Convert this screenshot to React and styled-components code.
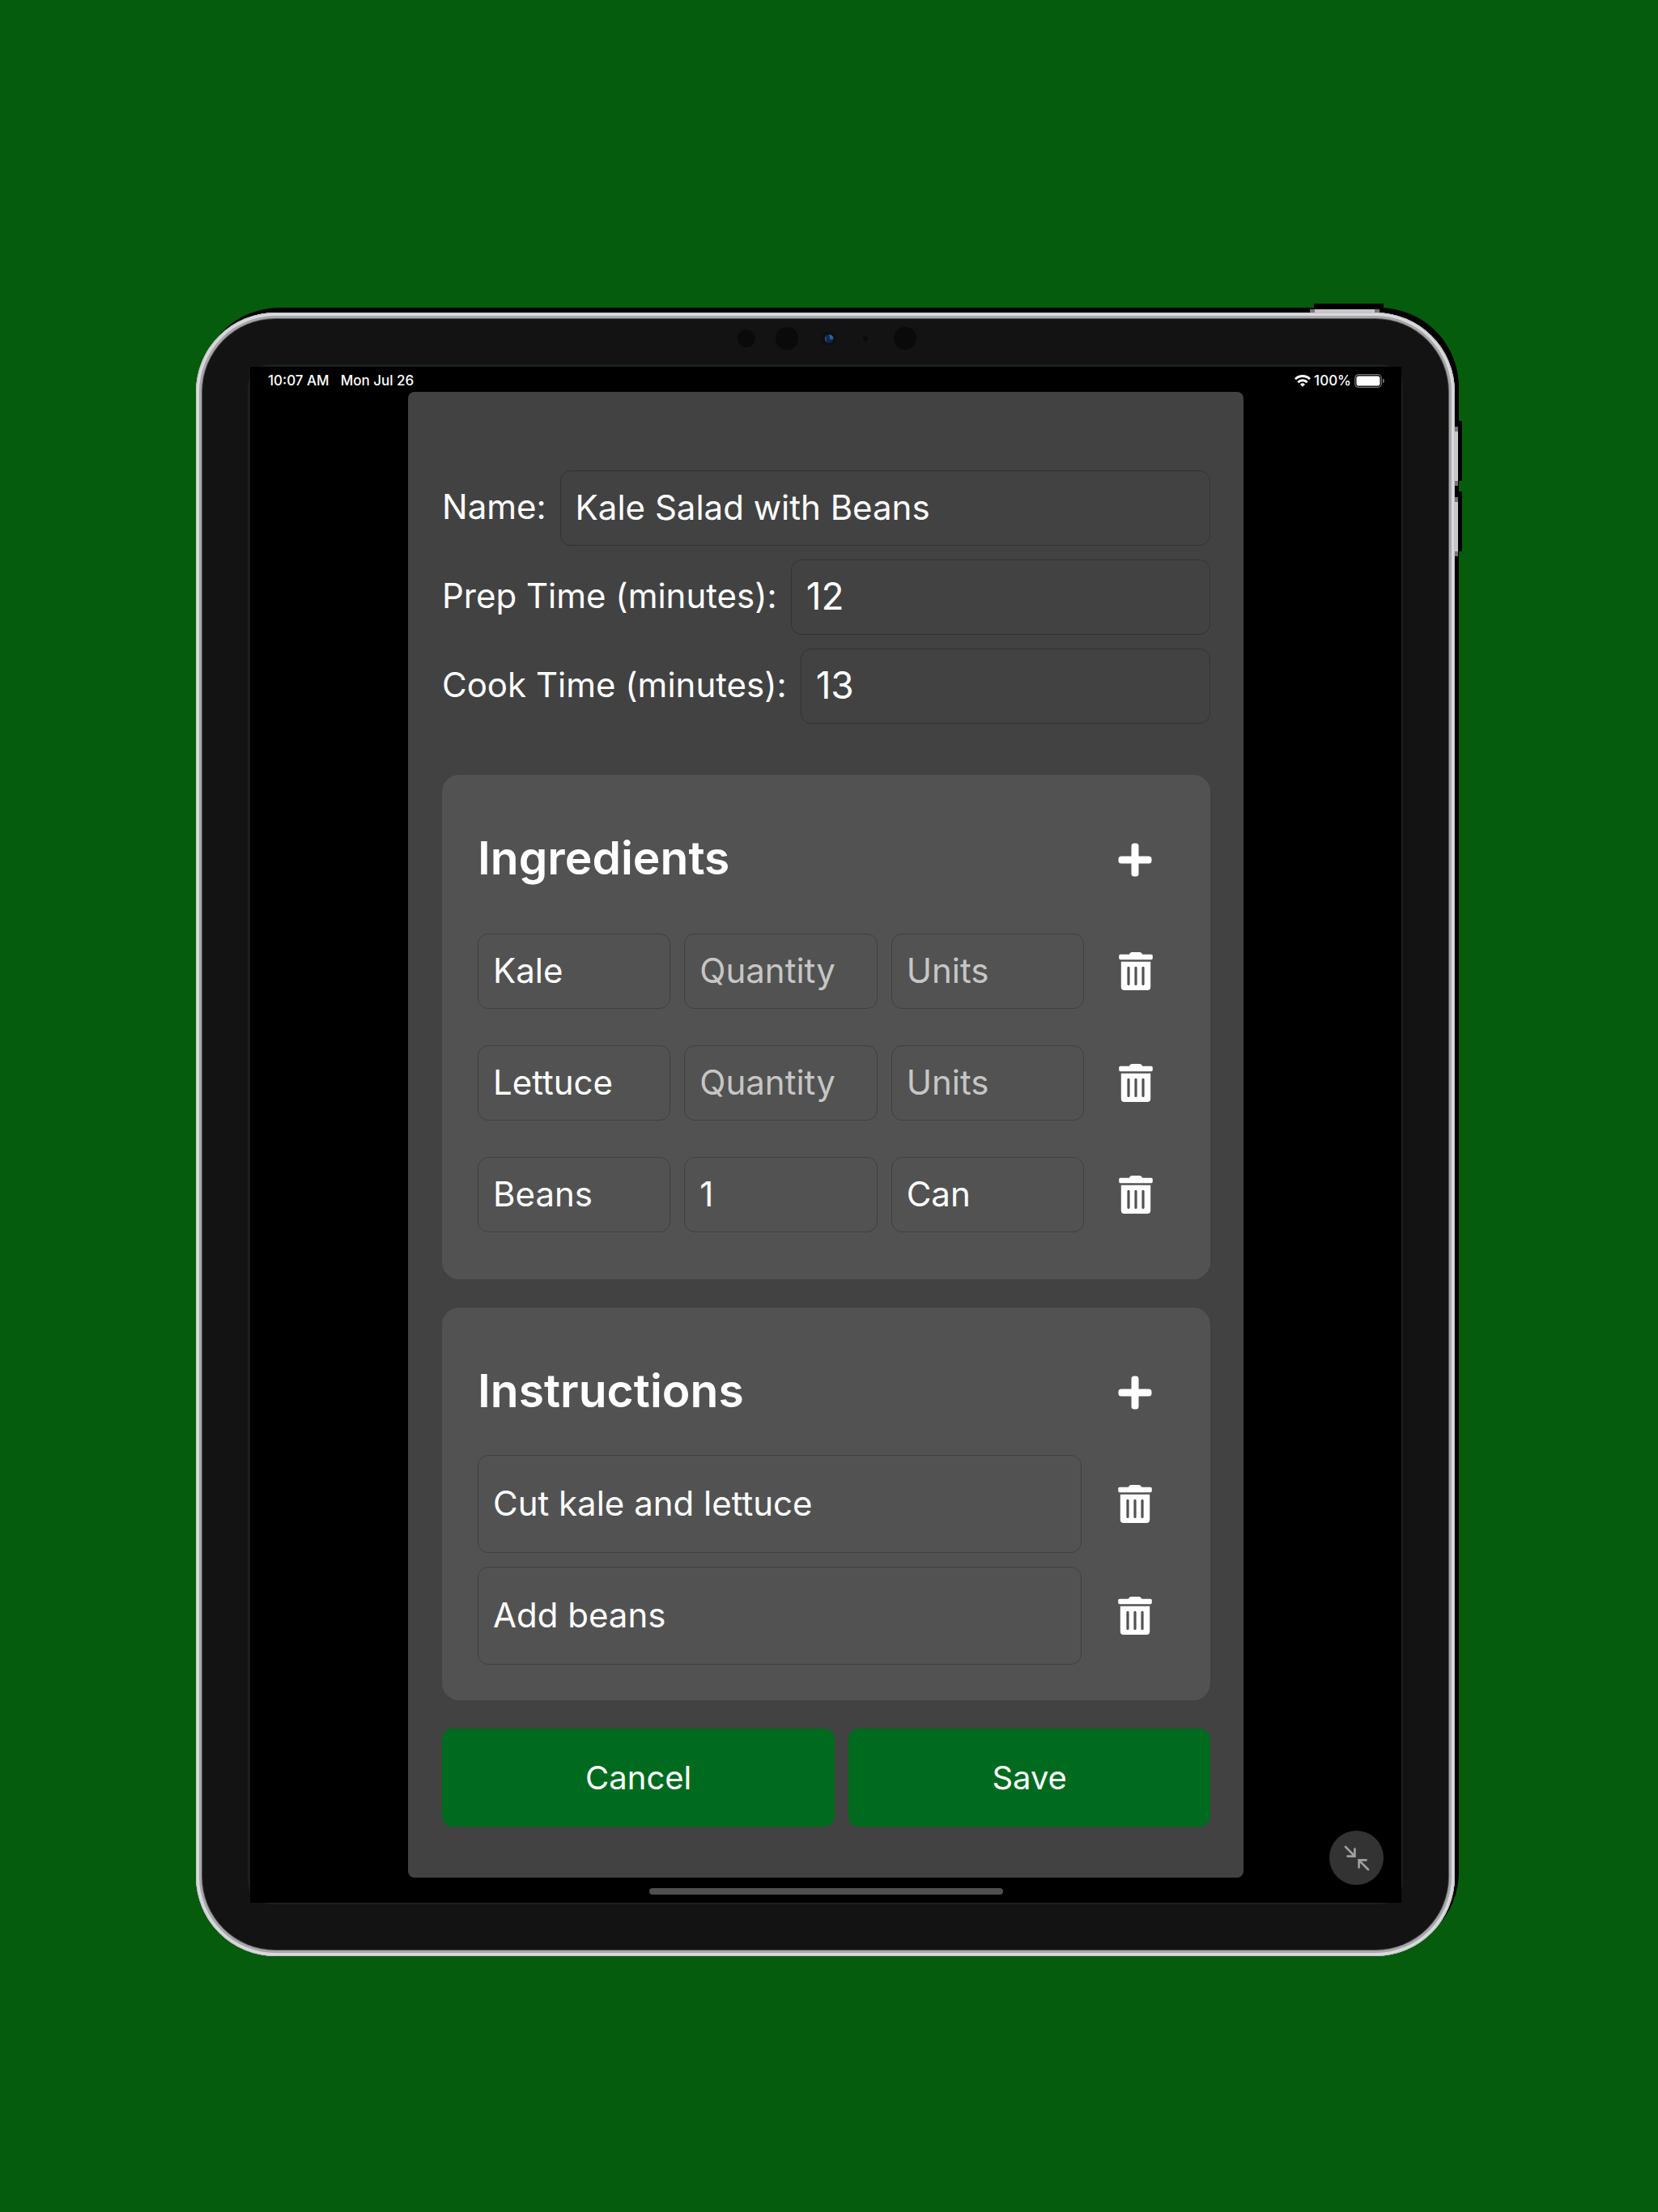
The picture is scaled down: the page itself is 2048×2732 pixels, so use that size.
import React from "react";
import styled, { createGlobalStyle } from "styled-components";

const GlobalStyle = createGlobalStyle`
  *, *::before, *::after { box-sizing: border-box; }
  html { background: #055c0d; }
  body {
    margin: 0;
    background: #055c0d;
    color: #fff;
    font-family: Inter, "Liberation Sans", sans-serif;
  }
`;

const Page = styled.main`
  padding: 386px 251px 316px 242px;
`;

const Device = styled.div`
  position: relative;
  padding: 8px;
  border-radius: 98px;
  background: #555;
  box-shadow:
    inset 0 0 0 1px #c2c2c5,
    inset 0 0 0 4px #dadade,
    inset 0 0 0 7px #a8a8ab,
    5px -6px 0 #000;
`;

const HardwareKey = styled.span`
  position: absolute;
  background: #c8c8c8;
  box-shadow: 5px -6px 0 #000, 5px -7px 0 #000;
`;

const PowerKey = styled(HardwareKey)`
  top: -4px;
  right: 93px;
  width: 86px;
  height: 4px;
  border: solid #777;
  border-width: 0 6px;
`;

const VolumeKey = styled(HardwareKey)`
  top: ${(p) => p.$top}px;
  right: -4px;
  width: 4px;
  height: 73px;
  border: solid #777;
  border-width: 6px 0;
`;

const Bezel = styled.div`
  padding: 0 56px 56px;
  border-radius: 90px;
  background: #131313;
`;

const CameraBar = styled.div`
  display: flex;
  justify-content: center;
  height: 56px;
  padding-top: 4px;
`;

const ScreenEdge = styled.div`
  padding: 3px 2px 2px 3px;
  border-radius: 28px;
  background: #1a1f1f;
`;

const Screen = styled.div`
  position: relative;
  background: #000;
`;

const StatusBar = styled.header`
  display: flex;
  align-items: center;
  justify-content: space-between;
  height: 31px;
  padding: 3px 21px 0 22px;
  font-size: 17px;
  font-weight: 500;
  line-height: 20px;
`;

const StatusGroup = styled.div`
  display: flex;
  align-items: center;
  gap: ${(p) => p.$gap}px;
`;

const Panel = styled.form`
  max-width: 1032px;
  margin: 0 auto;
  padding: 97px 41px 63px 42px;
  border-radius: 8px;
  background: #424242;
`;

const Fields = styled.div`
  display: grid;
  gap: 17px;
  margin-bottom: 63px;
`;

const Field = styled.div`
  display: flex;
  align-items: center;
  gap: 17px;
`;

const Label = styled.label`
  padding-bottom: 4px;
  font-size: 42px;
  line-height: 52px;
  white-space: nowrap;
`;

const TextInput = styled.input`
  flex: 1;
  width: 100%;
  min-width: 0;
  height: ${(p) => (p.$tall ? 121 : 93)}px;
  padding: 0 18px 3px;
  border: 1px solid rgba(0, 0, 0, 0.22);
  border-radius: 13px;
  outline: none;
  background: transparent;
  color: #fff;
  font-family: inherit;
  font-size: ${(p) => (p.$numeric ? 46 : 42)}px;

  &::placeholder {
    color: #c6c6c6;
    opacity: 1;
  }
`;

const Card = styled.section`
  display: grid;
  gap: 17px;
  margin-bottom: 35px;
  padding: 44px;
  border-radius: 21px;
  background: #525252;
`;

const CardRow = styled.div`
  display: grid;
  grid-template-columns: 1fr 98px;
  gap: 17px;
  align-items: center;
  height: 121px;
`;

const IngredientRow = styled(CardRow)`
  grid-template-columns: repeat(3, 1fr) 95px;
`;

const CardTitle = styled.h2`
  margin: 0;
  padding-bottom: 4px;
  font-size: 57px;
  font-weight: 600;
  line-height: 72px;
`;

const IconButton = styled.button`
  display: flex;
  align-items: center;
  justify-content: center;
  height: 121px;
  padding: 0;
  border: 0;
  background: none;
  color: #fff;
`;

const Actions = styled.div`
  display: flex;
  gap: 17px;
`;

const ActionButton = styled.button`
  flex: 1 1 auto;
  height: 121px;
  padding: 0;
  border: 0;
  border-radius: 13px;
  background: #006b1e;
  color: #fff;
  font-family: inherit;
  font-size: 40px;
`;

const ScreenFooter = styled.footer`
  display: flex;
  justify-content: center;
  height: 31px;
  padding-top: 13px;
`;

const HomeIndicator = styled.span`
  width: 437px;
  height: 8px;
  border-radius: 4px;
  background: #4f4f4f;
`;

const ShrinkButton = styled.button`
  position: absolute;
  right: 22px;
  bottom: 22px;
  display: flex;
  align-items: center;
  justify-content: center;
  width: 67px;
  height: 67px;
  padding: 0;
  border: 0;
  border-radius: 50%;
  background: #333;
  color: #a0a0a0;
`;

const Cameras = () => (
  <svg width="228" height="40" viewBox="0 0 228 40" aria-hidden="true">
    <g fill="#0a0a0a">
      <circle cx="16" cy="20" r="11" />
      <circle cx="66" cy="20" r="14" />
      <circle cx="118" cy="20" r="9" fill="#0f0f0f" />
      <circle cx="163" cy="20" r="3" />
      <circle cx="212" cy="20" r="14" />
    </g>
    <circle cx="118" cy="20.5" r="5.5" fill="#14264a" />
    <path d="M118 15a5.5 5.5 0 0 1 5.5 5.5l-4 1z" fill="#2365a5" />
    <path d="M114.5 16.5q-2.500 3.500 0 8z" fill="#2a64a0" />
  </svg>
);

const WifiIcon = () => (
  <svg width="20" height="15" viewBox="0 0 20 15" fill="none" stroke="#fff" strokeWidth="3" aria-hidden="true">
    <path d="M1 5.300a12.700 12.700 0 0 1 18 0" />
    <path d="M4.300 9.200a8 8 0 0 1 11.400 0" />
    <path d="M10 14.800l-3-3a4.300 4.300 0 0 1 6 0z" fill="#fff" stroke="none" />
  </svg>
);

const BatteryIcon = () => (
  <svg width="37" height="17" viewBox="0 0 37 17" aria-hidden="true">
    <rect x="0.700" y="0.700" width="32.600" height="15.600" rx="4.500" fill="none" stroke="#777" strokeWidth="1.200" />
    <rect x="2.500" y="2.500" width="29" height="12" rx="2.800" fill="#fff" />
    <path d="M35 5.500q2 1 2 3t-2 3z" fill="#777" />
  </svg>
);

const PlusIcon = () => (
  <svg width="42" height="42" viewBox="0 0 42 42" fill="currentColor" aria-hidden="true">
    <rect x="0.500" y="16.500" width="41" height="9" rx="3.500" />
    <rect x="16.500" y="0.500" width="9" height="41" rx="3.500" />
  </svg>
);

const TrashIcon = () => (
  <svg width="42" height="47" viewBox="0 0 42 47" fill="currentColor" aria-hidden="true">
    <path d="M2 2.700h10.700Q14 0 16 0h10q2 0 3.300 2.700H40q1.800 0 1.800 1.800v2.900Q41.800 9.200 40 9.200H2Q.2 9.200.2 7.400V4.500Q.2 2.700 2 2.700z" />
    <path
      fillRule="evenodd"
      d="M2.800 11.700h36.400V43q0 4-4 4H6.800q-4 0-4-4zM12 17.700q-1.600 0-1.600 1.600v20.100q0 1.600 1.600 1.600t1.600-1.600V19.300q0-1.600-1.600-1.600zM21 17.700q-1.600 0-1.600 1.600v20.100q0 1.600 1.600 1.600t1.600-1.600V19.300q0-1.600-1.600-1.600zM30 17.700q-1.600 0-1.600 1.600v20.100q0 1.600 1.600 1.600t1.600-1.600V19.300q0-1.600-1.600-1.600z"
    />
  </svg>
);

const ShrinkIcon = () => (
  <svg
    width="32"
    height="32"
    viewBox="0 0 32 32"
    fill="none"
    stroke="currentColor"
    strokeWidth="2.600"
    strokeLinecap="round"
    aria-hidden="true"
  >
    <path d="M2 2l11 11M13.400 4.500v9.100H4.500M30 30L19 19M18.600 27.500v-9.100h8.900" />
  </svg>
);

const fields = [
  { id: "name", label: "Name:", value: "Kale Salad with Beans" },
  { id: "prep", label: "Prep Time (minutes):", value: "12", numeric: true },
  { id: "cook", label: "Cook Time (minutes):", value: "13", numeric: true },
];

const ingredients = [
  { name: "Kale", quantity: "", units: "" },
  { name: "Lettuce", quantity: "", units: "" },
  { name: "Beans", quantity: "1", units: "Can" },
];

const instructions = ["Cut kale and lettuce", "Add beans"];

const CardHeader = ({ title, action }) => (
  <CardRow>
    <CardTitle>{title}</CardTitle>
    <IconButton type="button" aria-label={action}>
      <PlusIcon />
    </IconButton>
  </CardRow>
);

const DeleteButton = ({ label }) => (
  <IconButton type="button" aria-label={label}>
    <TrashIcon />
  </IconButton>
);

export default function App() {
  return (
    <Page>
      <GlobalStyle />
      <Device>
        <PowerKey />
        <VolumeKey $top={141} />
        <VolumeKey $top={228} />
        <Bezel>
          <CameraBar>
            <Cameras />
          </CameraBar>
          <ScreenEdge>
            <Screen>
              <StatusBar>
                <StatusGroup $gap={14}>
                  <span>10:07 AM</span>
                  <span>Mon Jul 26</span>
                </StatusGroup>
                <StatusGroup $gap={4}>
                  <WifiIcon />
                  <span>100%</span>
                  <BatteryIcon />
                </StatusGroup>
              </StatusBar>

              <Panel onSubmit={(e) => e.preventDefault()}>
                <Fields>
                  {fields.map((f) => (
                    <Field key={f.id}>
                      <Label htmlFor={f.id}>{f.label}</Label>
                      <TextInput
                        id={f.id}
                        $numeric={f.numeric}
                        inputMode={f.numeric ? "numeric" : "text"}
                        defaultValue={f.value}
                      />
                    </Field>
                  ))}
                </Fields>

                <Card>
                  <CardHeader title="Ingredients" action="Add ingredient" />
                  {ingredients.map((item) => (
                    <IngredientRow key={item.name}>
                      <TextInput aria-label="Ingredient" defaultValue={item.name} />
                      <TextInput aria-label="Quantity" placeholder="Quantity" defaultValue={item.quantity} />
                      <TextInput aria-label="Units" placeholder="Units" defaultValue={item.units} />
                      <DeleteButton label={`Delete ${item.name}`} />
                    </IngredientRow>
                  ))}
                </Card>

                <Card>
                  <CardHeader title="Instructions" action="Add instruction" />
                  {instructions.map((step) => (
                    <CardRow key={step}>
                      <TextInput $tall aria-label="Instruction" defaultValue={step} />
                      <DeleteButton label={`Delete ${step}`} />
                    </CardRow>
                  ))}
                </Card>

                <Actions>
                  <ActionButton type="button">Cancel</ActionButton>
                  <ActionButton type="submit">Save</ActionButton>
                </Actions>
              </Panel>

              <ScreenFooter>
                <HomeIndicator />
              </ScreenFooter>
              <ShrinkButton type="button" aria-label="Shrink window">
                <ShrinkIcon />
              </ShrinkButton>
            </Screen>
          </ScreenEdge>
        </Bezel>
      </Device>
    </Page>
  );
}
